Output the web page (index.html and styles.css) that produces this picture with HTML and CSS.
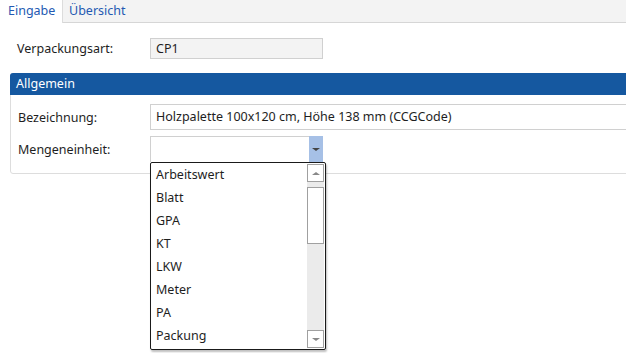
FILE: index.html
```html
<!DOCTYPE html>
<html lang="de">
<head>
<meta charset="utf-8">
<title>Verpackungsart</title>
<link rel="stylesheet" href="styles.css">
</head>
<body>
<div class="tabs">
  <div class="tab active">Eingabe</div>
  <div class="tab">Übersicht</div>
</div>
<div class="content">
  <div class="row top-row">
    <span class="label">Verpackungsart:</span>
    <div class="field readonly">CP1</div>
  </div>
  <div class="group">
    <div class="group-header">Allgemein</div>
    <div class="group-body">
      <div class="row">
        <span class="label">Bezeichnung:</span>
        <div class="field wide">Holzpalette 100x120 cm, Höhe 138 mm (CCGCode)</div>
      </div>
      <div class="row">
        <span class="label">Mengeneinheit:</span>
        <div class="combo">
          <div class="combo-text"></div>
          <div class="combo-btn"><span class="tri-down dark"></span></div>
          <div class="dropdown">
            <ul class="list">
              <li>Arbeitswert</li>
              <li>Blatt</li>
              <li>GPA</li>
              <li>KT</li>
              <li>LKW</li>
              <li>Meter</li>
              <li>PA</li>
              <li>Packung</li>
            </ul>
            <div class="scrollbar">
              <div class="sb-btn"><span class="tri-up"></span></div>
              <div class="sb-track"><div class="sb-thumb"></div></div>
              <div class="sb-btn"><span class="tri-down"></span></div>
            </div>
          </div>
        </div>
      </div>
    </div>
  </div>
</div>
</body>
</html>
```
FILE: styles.css
```css
* { box-sizing: border-box; }
html, body { margin: 0; padding: 0; background: #fff; overflow: hidden; }
body {
  font-family: "Noto Sans", "Open Sans", sans-serif;
  font-size: 12.5px;
  color: #1e1e1e;
  width: 626px;
  height: 353px;
}
.tabs {
  display: flex;
  height: 23px;
  background: #f3f3f3;
  border-bottom: 1px solid #d6d6d6;
}
.tab {
  height: 22px;
  line-height: 22px;
  padding: 0 7px 0 6px;
  color: #2459b2;
}
.tab.active {
  width: 63px;
  padding-left: 8px;
  height: 23px;
  background: #fff;
  border-right: 1px solid #dcdcdc;
}
.content {
  padding: 15px 0 0 10px;
}
.row {
  display: flex;
  align-items: center;
}
.label {
  width: 140px;
  padding-left: 7px;
  flex: none;
}
.field {
  height: 21px;
  line-height: 19px;
  padding-left: 5px;
  border: 1px solid #d0d0d0;
}
.readonly {
  width: 173px;
  background: #f3f3f3;
}
.group {
  margin-top: 14px;
  margin-right: -12px;
  border: 1px solid #dddddd;
  border-radius: 3px;
  height: 101px;
}
.group-header {
  height: 22px;
  line-height: 22px;
  background: #1558a0;
  color: #fff;
  padding-left: 6px;
  margin: -1px -1px 0 -1px;
  border-radius: 3px 3px 0 0;
}
.group-body {
  padding-top: 9px;
  display: flex;
  flex-direction: column;
  gap: 6px;
}
.group-body .label { width: 139px; }
.wide {
  flex: 1;
  height: 26px;
  line-height: 24px;
  border-right: none;
}
.combo {
  position: relative;
  width: 173px;
  height: 26px;
  display: flex;
  border-top: 1px solid #d0d0d0;
  border-left: 1px solid #d0d0d0;
}
.combo-text { flex: 1; }
.combo-btn {
  width: 14px;
  background: #a6c0e6;
  display: flex;
  align-items: center;
  justify-content: center;
  margin-top: -1px;
}
.tri-down, .tri-up {
  width: 0; height: 0;
  border-left: 4px solid transparent;
  border-right: 4px solid transparent;
}
.tri-down { border-top: 3px solid #888; }
.tri-down.dark { border-top-color: #444; }
.tri-up { border-bottom: 3px solid #888; }
.dropdown {
  position: absolute;
  top: 25px;
  left: -1px;
  width: 176px;
  height: 188px;
  background: #fff;
  border: 1px solid #1a1a1a;
  border-radius: 2px;
  box-shadow: 1px 2px 2px rgba(0,0,0,0.25);
  display: flex;
  z-index: 5;
}
.list {
  list-style: none;
  margin: 0;
  padding: 0;
  flex: 1;
}
.list li {
  height: 23px;
  line-height: 23px;
  padding-left: 5px;
}
.scrollbar {
  width: 17px;
  margin: 1px 1px 1px 0;
  background: #ebebeb;
  display: flex;
  flex-direction: column;
}
.sb-btn {
  height: 18px;
  background: #fff;
  border: 1px solid #a0a0a0;
  display: flex;
  align-items: center;
  justify-content: center;
}
.sb-track {
  flex: 1;
  padding-top: 5px;
}
.sb-thumb {
  height: 57px;
  background: #fff;
  border: 1px solid #a0a0a0;
}
```
